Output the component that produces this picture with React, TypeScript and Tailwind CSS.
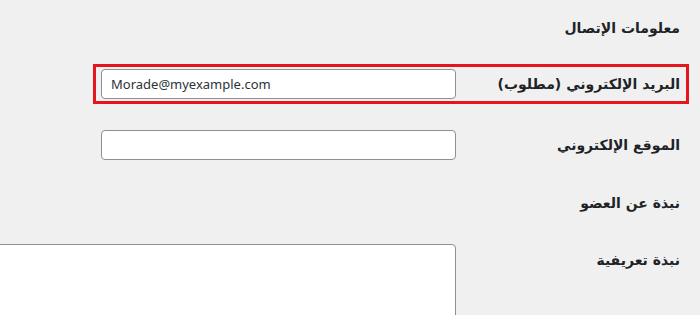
import React from 'react';

const labelCls = "text-[14px] font-bold leading-[18px] text-[#1d2327]";
const inputCls =
  "h-[30px] w-[355px] shrink-0 rounded-[4px] border border-[#8c8f94] bg-white px-[9px] text-[13px] text-[#2c3338] outline-none";

export default function App() {
  return (
    <div
      dir="rtl"
      className="h-[315px] w-[700px] overflow-hidden bg-[#f0f0f0]"
      style={{ fontFamily: '"DejaVu Sans", Tahoma, sans-serif' }}
    >
      <h2 className="pr-[20px] pt-[19px] text-[14px] font-semibold leading-[18px] text-[#1d2327]">
        معلومات الإتصال
      </h2>

      {/* highlighted email row */}
      <div className="mr-[11px] mt-[27px] flex h-[40px] w-[596px] items-center border-[3px] border-[#e4161c]">
        <label className={`w-[230px] shrink-0 pr-[6px] ${labelCls}`}>البريد الإلكتروني (مطلوب)</label>
        <input
          type="email"
          dir="ltr"
          defaultValue="Morade@myexample.com"
          className={inputCls}
          style={{ fontFamily: '"Noto Sans", "Open Sans", sans-serif' }}
        />
      </div>

      <div className="mt-[26px] flex h-[30px] items-center">
        <label className={`w-[244px] shrink-0 pr-[20px] ${labelCls}`}>الموقع الإلكتروني</label>
        <input type="url" dir="ltr" className={inputCls} />
      </div>

      <h2 className="mt-[34px] pr-[20px] text-[14px] font-semibold leading-[18px] text-[#1d2327]">
        نبذة عن العضو
      </h2>

      <div className="mt-[32px] flex items-start">
        <label className={`w-[244px] shrink-0 pr-[20px] pt-[7px] ${labelCls}`}>نبذة تعريفية</label>
        <textarea className="h-[120px] w-[520px] shrink-0 resize-none rounded-[4px] border border-[#8c8f94] bg-white" />
      </div>
    </div>
  );
}
